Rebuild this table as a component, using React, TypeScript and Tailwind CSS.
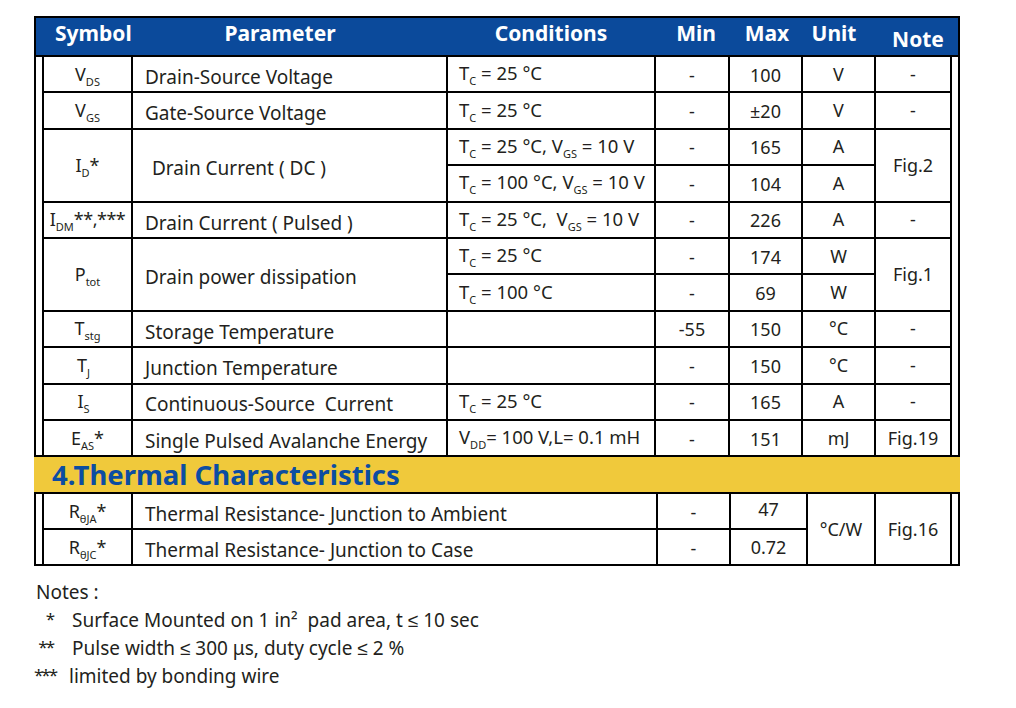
import type { ReactNode } from 'react'

const cols = 'grid grid-cols-[87px_313px_206px_72px_71px_71px_74px]'
const cell = 'bg-white flex items-center justify-center'
const sym = 'bg-white flex items-center justify-center'
const param = 'bg-white flex items-center pl-[12px] pt-[6px] text-[19px]'
const cond = 'bg-white flex items-center pl-[11px] pb-[2px] text-[18.5px]'
const val = 'bg-white flex items-center justify-center pt-[2px]'
const mark = 'w-[19px] text-right text-[17px] tracking-[-2px] -translate-y-[1px]'

function Sub({ children }: { children: ReactNode }) {
  return <span className="text-[11px] align-[-5px] leading-none">{children}</span>
}

function Tc({ t }: { t: string }) {
  return (
    <span>
      T<Sub>C</Sub> = {t} °C
    </span>
  )
}

export default function App() {
  return (
    <div className="min-h-[708px] bg-white text-[18px] text-[#231f20] font-['Noto_Sans',sans-serif]">
      <div className="pt-[16px]">
        {/* ratings table */}
        <div className="ml-[34px] w-[926px] border-2 border-black">
          <div className="h-[39px] bg-[#0b4a9b] border-b-2 border-black text-white font-bold text-[21px]">
            <div className={`${cols} gap-x-[2px] px-[8px] h-full items-center`}>
              <div className="text-center pl-[11px] pb-[7px]">Symbol</div>
              <div className="text-center pr-[19px] pb-[7px]">Parameter</div>
              <div className="text-center pb-[7px]">Conditions</div>
              <div className="text-center pl-[8px] pb-[7px]">Min</div>
              <div className="text-center pl-[3px] pb-[7px]">Max</div>
              <div className="text-center pr-[9px] pb-[7px]">Unit</div>
              <div className="text-center pl-[10px] pt-[4px]">Note</div>
            </div>
          </div>
          <div className="px-[6px]">
            <div className={`${cols} grid-rows-[repeat(11,34.4px)] gap-[2px] bg-black px-[2px]`}>
              <div className={sym}><span>V<Sub>DS</Sub></span></div>
              <div className={param}>Drain-Source Voltage</div>
              <div className={cond}><Tc t="25" /></div>
              <div className={val}>-</div>
              <div className={val}>100</div>
              <div className={cell}>V</div>
              <div className={cell}>-</div>

              <div className={sym}><span>V<Sub>GS</Sub></span></div>
              <div className={param}>Gate-Source Voltage</div>
              <div className={cond}><Tc t="25" /></div>
              <div className={val}>-</div>
              <div className={val}>±20</div>
              <div className={cell}>V</div>
              <div className={cell}>-</div>

              <div className={`${sym} row-span-2`}><span>I<Sub>D</Sub>*</span></div>
              <div className={`${param} row-span-2 pl-[19px]`}>Drain Current ( DC )</div>
              <div className={cond}><span>T<Sub>C</Sub> = 25 °C, V<Sub>GS</Sub> = 10 V</span></div>
              <div className={val}>-</div>
              <div className={val}>165</div>
              <div className={cell}>A</div>
              <div className={`${cell} row-span-2`}>Fig.2</div>
              <div className={cond}><span>T<Sub>C</Sub> = 100 °C, V<Sub>GS</Sub> = 10 V</span></div>
              <div className={val}>-</div>
              <div className={val}>104</div>
              <div className={cell}>A</div>

              <div className={sym}><span>I<Sub>DM</Sub><span className="tracking-[-0.5px]">**,***</span></span></div>
              <div className={param}>Drain Current ( Pulsed )</div>
              <div className={cond}><span>T<Sub>C</Sub> = 25 °C,&nbsp; V<Sub>GS</Sub> = 10 V</span></div>
              <div className={val}>-</div>
              <div className={val}>226</div>
              <div className={cell}>A</div>
              <div className={cell}>-</div>

              <div className={`${sym} row-span-2`}><span>P<Sub>tot</Sub></span></div>
              <div className={`${param} row-span-2 pl-[11px]`}>Drain power dissipation</div>
              <div className={cond}><Tc t="25" /></div>
              <div className={val}>-</div>
              <div className={val}>174</div>
              <div className={cell}>W</div>
              <div className={`${cell} row-span-2`}>Fig.1</div>
              <div className={cond}><Tc t="100" /></div>
              <div className={val}>-</div>
              <div className={val}>69</div>
              <div className={cell}>W</div>

              <div className={sym}><span>T<Sub>stg</Sub></span></div>
              <div className={param}>Storage Temperature</div>
              <div className={cond}></div>
              <div className={val}>-55</div>
              <div className={val}>150</div>
              <div className={cell}>°C</div>
              <div className={cell}>-</div>

              <div className={`${sym} pr-[8px]`}><span>T<Sub>J</Sub></span></div>
              <div className={param}>Junction Temperature</div>
              <div className={cond}></div>
              <div className={val}>-</div>
              <div className={val}>150</div>
              <div className={cell}>°C</div>
              <div className={cell}>-</div>

              <div className={`${sym} pr-[8px]`}><span>I<Sub>S</Sub></span></div>
              <div className={param}>Continuous-Source&nbsp; Current</div>
              <div className={cond}><Tc t="25" /></div>
              <div className={val}>-</div>
              <div className={val}>165</div>
              <div className={cell}>A</div>
              <div className={cell}>-</div>

              <div className={sym}><span>E<Sub>AS</Sub>*</span></div>
              <div className={param}>Single Pulsed Avalanche Energy</div>
              <div className={cond}><span>V<Sub>DD</Sub>= 100 V,L= 0.1 mH</span></div>
              <div className={val}>-</div>
              <div className={val}>151</div>
              <div className={cell}>mJ</div>
              <div className={cell}>Fig.19</div>
            </div>
          </div>
        </div>

        {/* section title */}
        <div className="ml-[34px] w-[926px] h-[35px] bg-[#f0c93b] flex items-center pl-[18px]">
          <span className="text-[27.5px] font-bold text-[#0c4da2] leading-none">4.Thermal Characteristics</span>
        </div>

        {/* thermal table */}
        <div className="ml-[34px] w-[926px] border-2 border-black px-[6px]">
          <div className="grid grid-cols-[87px_523px_71px_75px_66px_74px] grid-rows-[34px_34px] gap-[2px] bg-black px-[2px]">
            <div className={sym}><span>R<Sub>θJA</Sub>*</span></div>
            <div className={param}>Thermal Resistance- Junction to Ambient</div>
            <div className={val}>-</div>
            <div className={`${cell} pb-[4px]`}>47</div>
            <div className={`${cell} row-span-2`}>°C/W</div>
            <div className={`${cell} row-span-2`}>Fig.16</div>
            <div className={sym}><span>R<Sub>θJC</Sub>*</span></div>
            <div className={param}>Thermal Resistance- Junction to Case</div>
            <div className={val}>-</div>
            <div className={`${cell} pt-[1px]`}>0.72</div>
          </div>
        </div>

        {/* notes */}
        <div className="ml-[34px] mt-[12px] leading-[28px] text-[19px]">
          <div className="pl-[2px]">Notes :</div>
          <div className="flex">
            <span className={mark}>*</span>
            <span className="ml-[19px]">Surface Mounted on 1 in²&nbsp; pad area, t ≤ 10 sec</span>
          </div>
          <div className="flex">
            <span className={mark}>**</span>
            <span className="ml-[19px]">Pulse width ≤ 300 μs, duty cycle ≤ 2 %</span>
          </div>
          <div className="flex">
            <span className={mark}>***</span>
            <span className="ml-[16px]">limited by bonding wire</span>
          </div>
        </div>
      </div>
    </div>
  )
}
